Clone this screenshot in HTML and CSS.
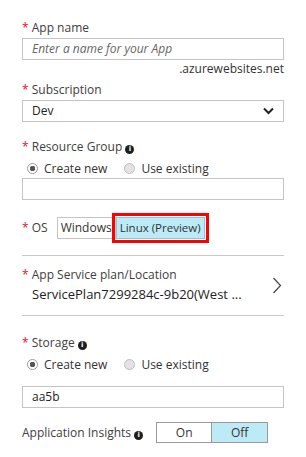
FILE: index.html
```html
<!DOCTYPE html>
<html lang="en">
<head>
    <meta charset="UTF-8">
    <title>Web App + Linux</title>
    <link rel="stylesheet" href="styles.css">
</head>
<body>
    <div class="blade">
        <div class="label"><span class="req">*</span> App name</div>
        <div class="textbox placeholder">Enter a name for your App</div>
        <div class="suffix">.azurewebsites.net</div>

        <div class="label"><span class="req">*</span> Subscription</div>
        <div class="textbox select">
            <span>Dev</span>
            <svg width="11" height="8" viewBox="0 0 11 8"><path d="M1 1.5 L5.5 6 L10 1.5" fill="none" stroke="#222" stroke-width="2"/></svg>
        </div>

        <div class="label gap"><span class="req">*</span> Resource Group <span class="info">i</span></div>
        <div class="radios">
            <span class="radio checked"></span><span class="radio-text">Create new</span>
            <span class="radio"></span><span class="radio-text">Use existing</span>
        </div>
        <div class="textbox"></div>

        <div class="os-row">
            <span class="label"><span class="req">*</span> OS</span>
            <div class="os-toggle">
                <span class="os-btn">Windows</span>
                <span class="os-btn active">Linux (Preview)</span>
            </div>
        </div>

        <div class="plan">
            <div class="plan-text">
                <div class="label"><span class="req">*</span> App Service plan/Location</div>
                <div class="plan-value">ServicePlan7299284c-9b20(West ...</div>
            </div>
            <svg width="10" height="17" viewBox="0 0 10 17"><path d="M1.5 1 L8.5 8.5 L1.5 16" fill="none" stroke="#444" stroke-width="1.2"/></svg>
        </div>

        <div class="label gap-sm"><span class="req">*</span> Storage <span class="info">i</span></div>
        <div class="radios">
            <span class="radio checked"></span><span class="radio-text">Create new</span>
            <span class="radio"></span><span class="radio-text">Use existing</span>
        </div>
        <div class="textbox value">aa5b</div>

        <div class="insights">
            <span class="label">Application Insights <span class="info">i</span></span>
            <div class="switch">
                <span class="switch-btn">On</span>
                <span class="switch-btn active">Off</span>
            </div>
        </div>
    </div>
</body>
</html>
```

FILE: styles.css
```css
* {
    margin: 0;
    padding: 0;
    box-sizing: border-box;
}

body {
    font-family: 'Open Sans', 'Noto Sans', sans-serif;
    background-color: #fff;
    color: #3c3c3c;
}

.blade {
    width: 262px;
    margin-left: 22px;
    padding-top: 19px;
}

.label {
    font-size: 12px;
    line-height: 18px;
    height: 18px;
    color: #404040;
    white-space: nowrap;
}

.req {
    color: #e81123;
}

.info {
    display: inline-block;
    width: 9px;
    height: 9px;
    border-radius: 50%;
    background-color: #1e1e1e;
    color: #fff;
    font-size: 7px;
    font-weight: bold;
    line-height: 9px;
    text-align: center;
    vertical-align: 0;
    font-family: 'DejaVu Sans', sans-serif;
}

.textbox {
    height: 22px;
    border: 1px solid #c4c4c4;
    margin-top: 1px;
    padding: 0 9px;
    font-size: 12px;
    line-height: 20px;
    color: #222;
}

.placeholder {
    font-style: italic;
    color: #666;
}

.suffix {
    text-align: right;
    font-size: 12px;
    line-height: 18px;
    color: #333;
    margin-bottom: 3px;
}

.select {
    display: flex;
    justify-content: space-between;
    align-items: center;
}

.gap {
    margin-top: 16px;
}

.gap-sm {
    margin-top: 18px;
}

.radios {
    display: flex;
    align-items: center;
    height: 18px;
    margin-top: 3px;
    padding-left: 5px;
}

.radio {
    width: 11px;
    height: 11px;
    border-radius: 50%;
    border: 1px solid #bdbdbd;
    background-color: #e3e3e3;
    margin-right: 6px;
}

.radio.checked {
    background-color: #fff;
    border-color: #9a9a9a;
    background-image: radial-gradient(circle, #555 0, #555 2.5px, #fff 3px);
}

.radio-text {
    font-size: 12px;
    color: #333;
    margin-right: 17px;
}

.os-row {
    display: flex;
    align-items: center;
    margin-top: 17px;
    height: 22px;
}

.os-toggle {
    display: flex;
    margin-left: 9px;
}

.os-btn {
    height: 22px;
    font-size: 12px;
    line-height: 20px;
    border: 1px solid #c4c4c4;
    padding: 0 3px;
    color: #333;
}

.os-btn.active {
    font-size: 11.5px;
    background-color: #bdeaf7;
    border-color: #8ec7d6;
    outline: 3px solid #f00;
    outline-offset: 1px;
}

.plan {
    margin-top: 16px;
    border-top: 1px solid #c8c8c8;
    border-bottom: 1px solid #c8c8c8;
    padding: 10px 2px 11px 0;
    display: flex;
    justify-content: space-between;
    align-items: center;
}

.plan-value {
    font-size: 13px;
    line-height: 20px;
    padding-left: 10px;
    color: #222;
}

.value {
    margin-top: 13px;
}

.insights {
    display: flex;
    align-items: center;
    margin-top: 14px;
}

.switch {
    display: flex;
    margin-left: 13px;
}

.switch-btn {
    width: 56px;
    height: 21px;
    border: 1px solid #9a9a9a;
    font-size: 12px;
    line-height: 19px;
    text-align: center;
    color: #333;
}

.switch-btn.active {
    background-color: #bdeaf7;
    border-left: none;
}
```
